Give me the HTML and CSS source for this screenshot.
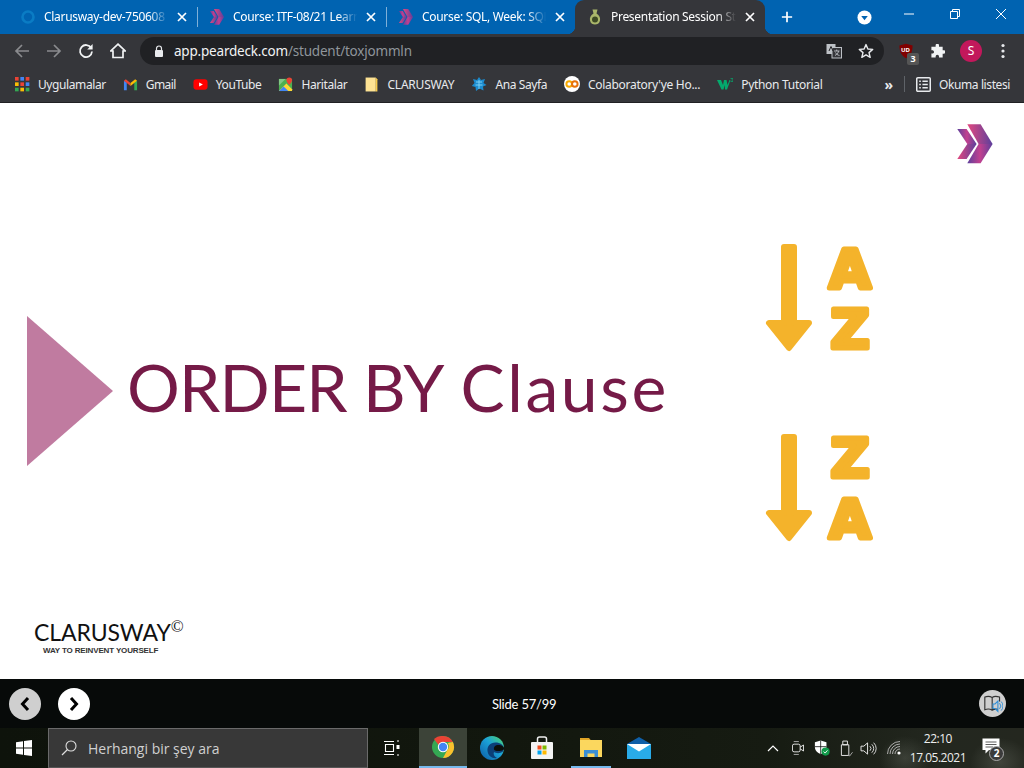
FILE: index.html
```html
<!DOCTYPE html>
<html lang="tr">
<head>
    <meta charset="UTF-8">
    <title>Presentation Session Student</title>
    <link rel="stylesheet" href="styles.css">
</head>
<body>
    <!-- shared shapes -->
    <svg class="sprite" width="0" height="0">
        <defs>
            <linearGradient id="chev-top" x1="0" y1="0" x2="1" y2="0">
                <stop offset="0" stop-color="#e2487f"/>
                <stop offset="1" stop-color="#5c3f9c"/>
            </linearGradient>
            <linearGradient id="chev-low" x1="0" y1="0" x2="1" y2="0">
                <stop offset="0" stop-color="#5c3f9c"/>
                <stop offset="0.5" stop-color="#c2408f"/>
                <stop offset="1" stop-color="#5c3f9c"/>
            </linearGradient>
            <symbol id="chevrons" viewBox="0 0 36 40">
                <polygon points="0.3,5 9.6,5 19.6,20 10.3,20" fill="url(#chev-low)"/>
                <polygon points="10.3,20 19.6,20 9.6,35 0.3,35" fill="url(#chev-top)"/>
                <polygon points="10.3,0.3 23.6,0.3 35.6,20 21.6,20" fill="url(#chev-top)"/>
                <polygon points="21.6,20 35.6,20 23.6,39.3 10.3,39.3" fill="url(#chev-low)"/>
            </symbol>
            <symbol id="tab-x" viewBox="0 0 10 10">
                <path d="M1 1 L9 9 M9 1 L1 9" stroke="#fff" stroke-width="1.7"/>
            </symbol>
        </defs>
    </svg>

    <div class="tabstrip">
        <div class="tab">
            <svg class="tab-icon" viewBox="0 0 16 16"><circle cx="8" cy="8" r="5.5" fill="none" stroke="#0a7cc4" stroke-width="2.6"/></svg>
            <span class="tab-title">Clarusway-dev-750608 -</span>
            <svg class="tab-close"><use href="#tab-x"/></svg>
        </div>
        <div class="tab tab-sep">
            <svg class="tab-icon" viewBox="0 0 16 16"><use href="#chevrons"/></svg>
            <span class="tab-title">Course: ITF-08/21 Learn</span>
            <svg class="tab-close"><use href="#tab-x"/></svg>
        </div>
        <div class="tab tab-sep">
            <svg class="tab-icon" viewBox="0 0 16 16"><use href="#chevrons"/></svg>
            <span class="tab-title">Course: SQL, Week: SQL</span>
            <svg class="tab-close"><use href="#tab-x"/></svg>
        </div>
        <div class="tab tab-active">
            <svg class="tab-icon" viewBox="0 0 16 16">
                <path d="M5.5 0.5 L10.5 0.5 L9.5 4.5 C12.5 6 13.5 9 13 11.5 C12.5 14.5 10 15.5 8 15.5 C6 15.5 3.5 14.5 3 11.5 C2.5 9 3.5 6 6.5 4.5 Z" fill="#a9b66a"/>
                <circle cx="8" cy="10.5" r="3" fill="#3d4a24"/>
            </svg>
            <span class="tab-title">Presentation Session St</span>
            <svg class="tab-close"><use href="#tab-x"/></svg>
        </div>
        <svg class="new-tab" viewBox="0 0 14 14"><path d="M7 1 V13 M1 7 H13" stroke="#fff" stroke-width="2"/></svg>
        <div class="strip-right">
            <svg class="tab-search" viewBox="0 0 16 16"><circle cx="8" cy="8" r="7.5" fill="#fff"/><path d="M4.5 6.3 H11.5 L8 10.8 Z" fill="#0063b1"/></svg>
            <div class="win-btns">
                <svg viewBox="0 0 12 12"><path d="M1 6 H11" stroke="#fff"/></svg>
                <svg viewBox="0 0 12 12"><path d="M1.5 3.5 H8.5 V10.5 H1.5 Z M3.5 3.5 V1.5 H10.5 V8.5 H8.5" fill="none" stroke="#fff"/></svg>
                <svg viewBox="0 0 12 12"><path d="M1 1 L11 11 M11 1 L1 11" stroke="#fff"/></svg>
            </div>
        </div>
    </div>

    <div class="toolbar">
        <svg class="tool-icon" viewBox="0 0 16 16"><path d="M15 8 H2 M8 2 L2 8 L8 14" fill="none" stroke="#8a8b8e" stroke-width="1.7"/></svg>
        <svg class="tool-icon" viewBox="0 0 16 16"><path d="M1 8 H14 M8 2 L14 8 L8 14" fill="none" stroke="#8a8b8e" stroke-width="1.7"/></svg>
        <svg class="tool-icon" viewBox="0 0 16 16"><path d="M13.2 5 A6 6 0 1 0 14 8.5" fill="none" stroke="#f1f3f4" stroke-width="1.8"/><path d="M14.6 1 V6.4 H9.2 Z" fill="#f1f3f4"/></svg>
        <svg class="tool-icon" viewBox="0 0 16 16"><path d="M8 1.2 L15.2 8 H13 V14.5 H3 V8 H0.8 Z" fill="none" stroke="#f1f3f4" stroke-width="1.7"/></svg>
        <div class="omnibox">
            <svg class="lock" viewBox="0 0 10 12"><path d="M2.5 5 V3.5 A2.5 2.5 0 0 1 7.5 3.5 V5" fill="none" stroke="#e8eaed" stroke-width="1.2"/><rect x="1" y="5" width="8" height="7" rx="1" fill="#e8eaed"/></svg>
            <span class="url">app.peardeck.com<span class="url-path">/student/toxjommln</span></span>
            <svg class="omni-translate" viewBox="0 0 16 16"><rect x="0.5" y="1" width="9" height="10" fill="#bdc1c6"/><rect x="6" y="4.5" width="9.5" height="10.5" fill="#35363a" stroke="#bdc1c6"/><path d="M3 8 L5 3.5 L7 8" fill="none" stroke="#202124"/><path d="M8 8 H13.5 M10.7 6.5 V8 M9 12.5 C11.5 11 12.5 9.5 12.5 8 M9.5 9.5 C10 11 11.5 12 13.5 12.5" fill="none" stroke="#bdc1c6" stroke-width="0.9"/></svg>
            <svg class="omni-star" viewBox="0 0 16 16"><path d="M8 1.6 L9.9 6 L14.7 6.4 L11 9.6 L12.2 14.3 L8 11.8 L3.8 14.3 L5 9.6 L1.3 6.4 L6.1 6 Z" fill="none" stroke="#e8eaed" stroke-width="1.4" stroke-linejoin="round"/></svg>
        </div>
        <div class="ext-ublock">
            <svg viewBox="0 0 16 16"><path d="M8 0.8 L14.6 2.6 C14.6 9 12.5 13 8 15.2 C3.5 13 1.4 9 1.4 2.6 Z" fill="#800000"/></svg>
            <span class="ublock-text">UD</span>
            <span class="ublock-badge">3</span>
        </div>
        <svg class="ext-puzzle" viewBox="0 0 16 16"><path d="M6 1.5 A1.8 1.8 0 0 1 9.6 1.5 V3 H13.5 V6.6 H14.6 A1.9 1.9 0 0 1 14.6 10.4 H13.5 V14.5 H9.6 V13.2 A1.8 1.8 0 0 0 6 13.2 V14.5 H1.5 V10.2 H3 A1.9 1.9 0 0 0 3 6.6 H1.5 V3 H6 Z" fill="#f1f3f4"/></svg>
        <span class="avatar">S</span>
        <svg class="menu-dots" viewBox="0 0 4 16"><circle cx="2" cy="2.5" r="1.6" fill="#e8eaed"/><circle cx="2" cy="8" r="1.6" fill="#e8eaed"/><circle cx="2" cy="13.5" r="1.6" fill="#e8eaed"/></svg>
    </div>

    <div class="bookmarks">
        <a class="bm bm-apps">
            <svg viewBox="0 0 14 14">
                <rect x="0" y="0" width="3.4" height="3.4" fill="#ea4335"/><rect x="5" y="0" width="3.4" height="3.4" fill="#4285f4"/><rect x="10" y="0" width="3.4" height="3.4" fill="#ea4335"/>
                <rect x="0" y="5" width="3.4" height="3.4" fill="#fbbc05"/><rect x="5" y="5" width="3.4" height="3.4" fill="#ea4335"/><rect x="10" y="5" width="3.4" height="3.4" fill="#4285f4"/>
                <rect x="0" y="10" width="3.4" height="3.4" fill="#34a853"/><rect x="5" y="10" width="3.4" height="3.4" fill="#fbbc05"/><rect x="10" y="10" width="3.4" height="3.4" fill="#34a853"/>
            </svg>
            Uygulamalar
        </a>
        <a class="bm bm-gmail">
            <svg viewBox="0 0 16 14"><path d="M1 13 V3 L4 4.5 V13 Z" fill="#4285f4"/><path d="M15 13 V3 L12 4.5 V13 Z" fill="#34a853"/><path d="M1 3 L8 8.5 L8 5.5 L3 1.5 Z" fill="#ea4335"/><path d="M15 3 L8 8.5 L8 5.5 L13 1.5 Z" fill="#fbbc05"/></svg>
            Gmail
        </a>
        <a class="bm bm-youtube">
            <svg viewBox="0 0 16 14"><rect x="0.5" y="1.5" width="15" height="11" rx="3" fill="#f00"/><path d="M6.5 4.8 L10.5 7 L6.5 9.2 Z" fill="#fff"/></svg>
            YouTube
        </a>
        <a class="bm bm-maps">
            <svg viewBox="0 0 16 16"><rect x="1" y="2" width="14" height="13" fill="#4caf50"/><path d="M1 15 L9 7 L15 13 V15 Z" fill="#fdd835"/><path d="M1 15 L6 10 L11 15 Z" fill="#4285f4"/><path d="M1 2 H8 L1 9 Z" fill="#81c784"/><path d="M12 0.5 A3 3 0 0 1 15 3.5 C15 5.5 12 8.5 12 8.5 C12 8.5 9 5.5 9 3.5 A3 3 0 0 1 12 0.5 Z" fill="#ea4335"/></svg>
            Haritalar
        </a>
        <a class="bm bm-folder">
            <svg viewBox="0 0 12 14"><path d="M0.5 0.5 H10 V13.5 H0.5 Z" fill="#fde293"/><path d="M10 0.5 L11.5 2 V13.5 H10 Z" fill="#f7cb4d"/></svg>
            CLARUSWAY
        </a>
        <a class="bm bm-home">
            <svg viewBox="0 0 16 16"><path d="M8 1 L10 4 L14 3 L12.5 7 L15.5 9 L12 10.5 L12.5 14.5 L8.5 12.5 L5 15 L4.5 11 L0.8 10 L3.5 7 L2 3 L6 4 Z" fill="#1c8ccf"/><path d="M5 6 H11 M4.5 9 H11.5 M8 4 V13" stroke="#7cd1f5"/></svg>
            Ana Sayfa
        </a>
        <a class="bm bm-colab">
            <svg viewBox="0 0 16 16"><circle cx="8" cy="8" r="8" fill="#fff"/><circle cx="5.2" cy="8" r="2.8" fill="none" stroke="#f9ab00" stroke-width="2"/><circle cx="10.8" cy="8" r="2.8" fill="none" stroke="#e8710a" stroke-width="2"/></svg>
            Colaboratory'ye Ho...
        </a>
        <a class="bm bm-w3">
            <svg viewBox="0 0 16 12"><path d="M0 2 H4 L6 7 L7 2 H9.5 L10.5 7 L12.5 2 H13.5 L10 11.5 H8 L7.8 7 L6.5 11.5 H4.5 Z" fill="#04aa6d"/><path d="M13.5 0.5 H16 L14.8 2 L16 3.5 H13.5" fill="none" stroke="#04aa6d" stroke-width="0.7"/></svg>
            Python Tutorial
        </a>
        <div class="bm-right">
            <span class="bm-more">»</span>
            <span class="bm-divider"></span>
            <a class="bm bm-reading">
                <svg viewBox="0 0 14 14"><rect x="0.7" y="0.7" width="12.6" height="12.6" rx="1" fill="none" stroke="#e8eaed" stroke-width="1.4"/><path d="M3 4 H4.5 M6 4 H11 M3 7 H4.5 M6 7 H11 M3 10 H4.5 M6 10 H11" stroke="#e8eaed" stroke-width="1.3"/></svg>
                Okuma listesi
            </a>
        </div>
    </div>

    <main class="slide">
        <svg class="slide-logo"><use href="#chevrons"/></svg>
        <svg class="slide-triangle" viewBox="0 0 86 150"><polygon points="0,0 86,75 0,150" fill="#c07ba0"/></svg>
        <h1 class="slide-title"><span class="title-caps">ORDER BY</span> <span class="title-word">Clause</span></h1>

        <svg class="sort-icon sort-az" viewBox="0 0 108 108">
            <path d="M19 3 H29 V79 H44 L24 104 L4 79 H19 Z" class="sort-arrow"/>
            <text x="85" y="43.5" class="sort-letter">A</text>
            <text x="85" y="103.5" class="sort-letter">Z</text>
        </svg>
        <svg class="sort-icon sort-za" viewBox="0 0 108 108">
            <path d="M19 3 H29 V79 H44 L24 104 L4 79 H19 Z" class="sort-arrow"/>
            <text x="85" y="42.5" class="sort-letter">Z</text>
            <text x="85" y="104" class="sort-letter">A</text>
        </svg>

        <div class="brand">
            <div class="brand-name">CLARUSWAY<sup class="brand-copy">©</sup></div>
            <div class="brand-tag">WAY TO REINVENT YOURSELF</div>
        </div>
    </main>

    <div class="slide-nav">
        <button class="nav-btn nav-prev"><svg viewBox="0 0 12 16"><path d="M9 2 L3.5 8 L9 14" fill="none" stroke="#000" stroke-width="3"/></svg></button>
        <button class="nav-btn nav-next"><svg viewBox="0 0 12 16"><path d="M3 2 L8.5 8 L3 14" fill="none" stroke="#000" stroke-width="3"/></svg></button>
        <span class="slide-count">Slide 57/99</span>
        <button class="nav-read">
            <svg viewBox="0 0 24 22">
                <path d="M11 3 C8.5 1.5 4.5 1.5 2 2.5 V18 C4.5 17 8.5 17 11 18.5 C13.5 17 16 17 18 17.5 M11 3 C13 1.5 17 1.5 20 2.5 V8 M11 3 V18.5" fill="none" stroke="#333" stroke-width="1.4"/>
                <path d="M12 11 H14.5 L18 7.5 V20 L14.5 16.5 H12 Z" fill="none" stroke="#2f8fd8" stroke-width="1.3"/>
                <path d="M20 10 A5 5 0 0 1 20 17 M22 8 A8 8 0 0 1 22 19" fill="none" stroke="#2f8fd8" stroke-width="1.2"/>
            </svg>
        </button>
    </div>

    <footer class="taskbar">
        <svg class="start" viewBox="0 0 16 16"><path d="M0 2.3 L7 1.3 V7.6 H0 Z M8 1.1 L16 0 V7.6 H8 Z M0 8.4 H7 V14.7 L0 13.7 Z M8 8.4 H16 V16 L8 14.9 Z" fill="#fff"/></svg>
        <div class="search-box">
            <svg viewBox="0 0 16 16"><circle cx="10" cy="6" r="5" fill="none" stroke="#ddd" stroke-width="1.1"/><path d="M6.5 9.5 L1 15" stroke="#ddd" stroke-width="1.2"/></svg>
            <span>Herhangi bir şey ara</span>
        </div>
        <div class="task-btn task-view">
            <svg viewBox="0 0 16 16"><path d="M0 1.5 H10 M0 14.5 H10 M1.5 4.5 H9.5 V11.5 H1.5 Z" fill="none" stroke="#fff" stroke-width="1.1"/><path d="M13 1 H15 M13 15 H15" stroke="#fff"/><rect x="12.5" y="5" width="3" height="4" fill="#fff"/></svg>
        </div>
        <div class="task-btn task-chrome">
            <svg viewBox="0 0 24 24">
                <circle cx="12" cy="12" r="11" fill="#34a853"/>
                <path d="M12 1 A11 11 0 0 1 21.9 7 H12 A5 5 0 0 0 7.5 10 L3 4 A11 11 0 0 1 12 1 Z" fill="#ea4335"/>
                <path d="M21.9 7 A11 11 0 0 1 12 23 L16.3 15 A5 5 0 0 0 16.5 8 Z" fill="#fbc02d"/>
                <circle cx="12" cy="12" r="5.2" fill="#fff"/><circle cx="12" cy="12" r="4.2" fill="#4285f4"/>
            </svg>
        </div>
        <div class="task-btn task-edge">
            <svg viewBox="0 0 24 24">
                <defs><linearGradient id="edge-g" x1="0" y1="1" x2="1" y2="0"><stop offset="0" stop-color="#0c59a4"/><stop offset="0.55" stop-color="#1ba1d8"/><stop offset="1" stop-color="#50d86a"/></linearGradient></defs>
                <circle cx="12" cy="12" r="12" fill="url(#edge-g)"/>
                <path d="M24 13 C24 9 20 6.5 15.5 6.5 C10 6.5 7 10.5 7.5 15 C8 20 12.5 23 17 22 C14 20.5 13 18 14 16 C16 17.5 20 17.5 22.5 16 Z" fill="#0c3f78"/>
                <path d="M24 12.5 C24 10 20.5 8.5 17 9 C14.5 9.5 13.5 11.5 14 13.5 C15 15 18 15.5 21 14.8 C22.5 14.5 24 14 24 12.5 Z" fill="#0b0f0a"/>
            </svg>
        </div>
        <div class="task-btn task-store">
            <svg viewBox="0 0 24 24">
                <path d="M7.5 7 V3 A2 2 0 0 1 9.5 1 H14.5 A2 2 0 0 1 16.5 3 V7" fill="none" stroke="#eee" stroke-width="1.5"/>
                <rect x="1" y="6" width="22" height="17" rx="1" fill="#f4f4f4"/>
                <rect x="7.5" y="9.5" width="4" height="4" fill="#f25022"/><rect x="12.5" y="9.5" width="4" height="4" fill="#7fba00"/>
                <rect x="7.5" y="14.5" width="4" height="4" fill="#00a4ef"/><rect x="12.5" y="14.5" width="4" height="4" fill="#ffb900"/>
            </svg>
        </div>
        <div class="task-btn task-files">
            <svg viewBox="0 0 24 24">
                <path d="M1 3 H10 L12 5.5 H1 Z" fill="#e0a526"/>
                <rect x="1" y="5" width="22" height="17" fill="#fbd75e"/>
                <path d="M5 22 V15 H19 V22 H15.5 V18.5 H8.5 V22 Z" fill="#3b8fd4"/>
            </svg>
        </div>
        <div class="task-btn task-mail">
            <svg viewBox="0 0 24 24">
                <path d="M12 1 L24 8 H0 Z" fill="#0f5fa8"/>
                <rect x="0" y="8" width="24" height="15" fill="#29abe8"/>
                <path d="M0 8 L12 15.5 L24 8 Z" fill="#fff"/>
            </svg>
        </div>

        <div class="tray">
            <svg class="tray-chevron" viewBox="0 0 12 8"><path d="M1 7 L6 2 L11 7" fill="none" stroke="#fff" stroke-width="1.2"/></svg>
            <svg class="tray-meet" viewBox="0 0 14 18"><rect x="0.5" y="4.5" width="9" height="9" rx="2" fill="none" stroke="#fff"/><path d="M9.5 8 L13.5 5.5 V12.5 L9.5 10" fill="none" stroke="#fff"/><path d="M2 1.5 H8 M2 16.5 H8" stroke="#bbb"/></svg>
            <svg class="tray-shield" viewBox="0 0 18 18"><path d="M7.5 0.5 L14 2.5 V8 C14 12 11 14.5 7.5 16 C4 14.5 1 12 1 8 V2.5 Z" fill="#fff"/><path d="M1 7.5 H14 M7.5 0.5 V16" stroke="#111" stroke-width="0.9"/><circle cx="13" cy="13" r="4.6" fill="#119a4a"/><path d="M10.8 13 L12.5 14.7 L15.2 11.6" fill="none" stroke="#fff" stroke-width="1"/></svg>
            <svg class="tray-usb" viewBox="0 0 14 18"><path d="M3 1 H8 V5 H3 Z M1.5 5 H9.5 V16.5 H1.5 Z" fill="none" stroke="#eee"/><path d="M8.5 16 L10.5 17 L13.5 13" fill="none" stroke="#aaa"/></svg>
            <svg class="tray-volume" viewBox="0 0 18 16"><path d="M1 5.5 H4 L8 2 V14 L4 10.5 H1 Z" fill="none" stroke="#eee"/><path d="M10.5 5.5 A3.5 3.5 0 0 1 10.5 10.5 M12.5 3.5 A6 6 0 0 1 12.5 12.5 M14.5 1.8 A8.5 8.5 0 0 1 14.5 14.2" fill="none" stroke="#ddd"/></svg>
            <svg class="tray-wifi" viewBox="0 0 14 14"><path d="M0.5 13 A12.5 12.5 0 0 1 13 0.5 M3 13 A10 10 0 0 1 13 3 M5.5 13 A7.5 7.5 0 0 1 13 5.5 M8 13 A5 5 0 0 1 13 8" fill="none" stroke="#bbb" stroke-width="0.9"/><circle cx="12" cy="12" r="1.6" fill="#fff"/></svg>
            <div class="clock"><span>22:10</span><span>17.05.2021</span></div>
            <div class="notify">
                <svg viewBox="0 0 18 16"><path d="M0.5 0.5 H17.5 V12 H7 L3.5 15.5 V12 H0.5 Z" fill="#fff"/><path d="M3.5 4 H14.5 M3.5 6.5 H14.5 M3.5 9 H11" stroke="#333" stroke-width="0.8"/></svg>
                <span class="notify-count">2</span>
            </div>
        </div>
    </footer>
</body>
</html>
```

FILE: styles.css
```css
* {
    box-sizing: border-box;
}
html, body {
    margin: 0;
    height: 100%;
}
body {
    display: flex;
    flex-direction: column;
    height: 768px;
    overflow: hidden;
    font-family: "Noto Sans", "Open Sans", sans-serif;
    font-size: 12px;
    color: #fff;
    background: #fff;
}
.sprite {
    position: absolute;
}

/* tabs */
.tabstrip {
    display: flex;
    align-items: center;
    height: 34px;
    flex: none;
    padding-left: 8px;
    background: #0063b1;
}
.tab {
    position: relative;
    display: flex;
    align-items: center;
    width: 189px;
    height: 34px;
    padding: 0 10px 0 12px;
    flex: none;
}
.tab-sep::before {
    content: "";
    position: absolute;
    left: 0;
    top: 7px;
    height: 20px;
    width: 1px;
    background: #7fb0d8;
}
.tab-icon {
    width: 16px;
    height: 16px;
    margin-right: 8px;
    flex: none;
}
.tab-title {
    flex: 1;
    min-width: 0;
    margin-top: -1px;
    overflow: hidden;
    white-space: nowrap;
    letter-spacing: -0.3px;
    -webkit-mask-image: linear-gradient(to right, #000 82%, transparent 97%);
    mask-image: linear-gradient(to right, #000 82%, transparent 97%);
}
.tab-close {
    width: 10px;
    height: 10px;
    margin-left: 5px;
    flex: none;
}
.tab-active {
    width: 190px;
    background: #35363a;
    border-radius: 9px 9px 0 0;
}
.tab-active::before,
.tab-active::after {
    content: "";
    position: absolute;
    bottom: 0;
    width: 8px;
    height: 8px;
}
.tab-active::before {
    left: -8px;
    background: radial-gradient(circle at 0 0, #0063b1 8px, #35363a 8.5px);
}
.tab-active::after {
    right: -8px;
    background: radial-gradient(circle at 100% 0, #0063b1 8px, #35363a 8.5px);
}
.new-tab {
    width: 12px;
    height: 12px;
    margin-left: 16px;
    flex: none;
}
.strip-right {
    display: flex;
    align-items: center;
    margin-left: auto;
}
.tab-search {
    width: 15px;
    height: 15px;
    margin-right: 31px;
}
.win-btns {
    display: flex;
    gap: 34px;
    margin-right: 17px;
    margin-top: -6px;
}
.win-btns svg {
    width: 12px;
    height: 12px;
}

/* toolbar */
.toolbar {
    display: flex;
    align-items: center;
    height: 34px;
    flex: none;
    padding-left: 14px;
    background: #35363a;
}
.tool-icon {
    width: 16px;
    height: 16px;
    margin-right: 16px;
    flex: none;
}
.omnibox {
    display: flex;
    align-items: center;
    width: 744px;
    height: 28px;
    margin-left: -2px;
    padding-left: 14px;
    border-radius: 14px;
    background: #202124;
}
.lock {
    width: 10px;
    height: 12px;
    margin-right: 10px;
}
.url {
    flex: 1;
    font-size: 13.5px;
    letter-spacing: -0.2px;
    color: #f1f3f4;
}
.url-path {
    color: #8f959b;
}
.omni-translate {
    width: 16px;
    height: 16px;
    margin-right: 16px;
}
.omni-star {
    width: 16px;
    height: 16px;
    margin-right: 10px;
}
.ext-ublock {
    position: relative;
    width: 16px;
    height: 16px;
    margin-left: 14px;
    flex: none;
}
.ext-ublock svg {
    display: block;
}
.ublock-text {
    position: absolute;
    left: 3px;
    top: 3px;
    font-size: 6px;
    font-weight: bold;
}
.ublock-badge {
    position: absolute;
    left: 9px;
    top: 10px;
    width: 12px;
    height: 12px;
    border-radius: 2px;
    background: #555;
    font-size: 9px;
    font-weight: bold;
    line-height: 12px;
    text-align: center;
}
.ext-puzzle {
    width: 15px;
    height: 15px;
    margin-left: 16px;
    flex: none;
}
.avatar {
    width: 22px;
    height: 22px;
    margin-left: 15px;
    border-radius: 50%;
    background: #c2185b;
    font-size: 12px;
    line-height: 22px;
    text-align: center;
    flex: none;
}
.menu-dots {
    width: 4px;
    height: 16px;
    margin-left: 19px;
    flex: none;
}

/* bookmarks */
.bookmarks {
    display: flex;
    align-items: center;
    height: 35px;
    flex: none;
    padding: 0 14px 2px 15px;
    gap: 17px;
    background: #35363a;
    border-bottom: 1px solid #202124;
}
.bm {
    display: flex;
    align-items: center;
    gap: 8px;
    color: #e8eaed;
    white-space: nowrap;
    letter-spacing: -0.4px;
}
.bm svg {
    width: 15px;
    height: 15px;
    flex: none;
}
.bm-gmail {
    letter-spacing: -0.6px;
}
.bm-folder {
    letter-spacing: -0.2px;
}
.bm-home svg,
.bm-colab svg,
.bm-w3 svg {
    width: 16px;
    height: 16px;
}
.bm-colab,
.bm-w3 {
    letter-spacing: -0.3px;
}
.bm-right {
    display: flex;
    align-items: center;
    margin-left: auto;
}
.bm-more {
    margin-right: 11px;
    font-size: 14px;
    font-weight: bold;
    color: #e8eaed;
}
.bm-divider {
    width: 1px;
    height: 16px;
    margin-right: 11px;
    background: #5f6368;
}

/* slide */
.slide {
    position: relative;
    flex: 1;
    background: #fff;
}
.slide-logo {
    position: absolute;
    left: 957px;
    top: 21px;
    width: 36px;
    height: 40px;
}
.slide-triangle {
    position: absolute;
    left: 27px;
    top: 213px;
    width: 86px;
    height: 150px;
}
.slide-title {
    position: absolute;
    left: 127px;
    top: 241px;
    margin: 0;
    font-family: Lato, sans-serif;
    font-size: 66px;
    font-weight: 400;
    line-height: 86px;
    white-space: nowrap;
    color: #751a47;
}
.title-caps {
    letter-spacing: -0.8px;
}
.title-word {
    letter-spacing: 2.6px;
}
.sort-icon {
    position: absolute;
    left: 765px;
    width: 108px;
    height: 108px;
    overflow: visible;
}
.sort-az {
    top: 141px;
}
.sort-za {
    top: 331px;
}
.sort-arrow {
    fill: #f4b32b;
    stroke: #f4b32b;
    stroke-width: 6;
    stroke-linejoin: round;
}
.sort-letter {
    font-family: "DejaVu Sans", sans-serif;
    font-size: 54px;
    font-weight: bold;
    text-anchor: middle;
    fill: #f4b32b;
    stroke: #f4b32b;
    stroke-width: 5;
    stroke-linejoin: round;
}
.brand {
    position: absolute;
    left: 34px;
    top: 515px;
    color: #111;
}
.brand-name {
    font-family: Lato, sans-serif;
    font-size: 23px;
    line-height: 28px;
    letter-spacing: -0.1px;
}
.brand-copy {
    font-family: "Liberation Serif", serif;
    font-size: 17px;
    line-height: 0;
}
.brand-tag {
    margin-left: 9px;
    font-family: "Liberation Sans", sans-serif;
    font-size: 8px;
    font-weight: bold;
    letter-spacing: -0.15px;
    color: #333;
}

/* slide navigation */
.slide-nav {
    position: relative;
    display: flex;
    align-items: center;
    height: 49px;
    flex: none;
    padding: 0 18px 0 9px;
    background: #070a09;
}
.nav-btn {
    display: flex;
    align-items: center;
    justify-content: center;
    width: 32px;
    height: 32px;
    margin-right: 17px;
    padding: 0;
    border: none;
    border-radius: 50%;
}
.nav-btn svg {
    width: 12px;
    height: 16px;
}
.nav-prev {
    background: #cfcfcf;
}
.nav-next {
    background: #fff;
}
.slide-count {
    margin-left: 385px;
    font-family: Lato, sans-serif;
    font-size: 13px;
    letter-spacing: -0.2px;
}
.nav-read {
    display: flex;
    align-items: center;
    justify-content: center;
    width: 27px;
    height: 27px;
    margin-left: auto;
    padding: 0;
    border: none;
    border-radius: 50%;
    background: #cfcfcf;
}
.nav-read svg {
    width: 20px;
    height: 18px;
}

/* windows taskbar */
.taskbar {
    display: flex;
    align-items: center;
    height: 40px;
    flex: none;
    background:
        radial-gradient(ellipse 26px 22px at 905px 30px, rgba(120, 125, 115, 0.3), transparent),
        radial-gradient(ellipse 30px 24px at 1000px 34px, rgba(130, 135, 125, 0.3), transparent),
        linear-gradient(to right, #0e130b 0%, #12170e 50%, #161b12 75%, #23271f 92%, #24271f 100%);
}
.start {
    width: 16px;
    height: 16px;
    margin: 0 16px;
    flex: none;
}
.search-box {
    display: flex;
    align-items: center;
    width: 320px;
    height: 40px;
    padding-left: 12px;
    border: 1px solid #6a6a6a;
    border-bottom-color: #555;
    background: #383838;
    font-family: "Open Sans", sans-serif;
    font-size: 14px;
    color: #d0d0d0;
    flex: none;
}
.search-box svg {
    width: 16px;
    height: 16px;
    margin-right: 11px;
}
.task-btn {
    display: flex;
    align-items: center;
    justify-content: center;
    width: 48px;
    height: 40px;
    flex: none;
}
.task-btn svg {
    width: 24px;
    height: 24px;
}
.task-view {
    width: 51px;
    padding-right: 4px;
}
.task-view svg {
    width: 16px;
    height: 16px;
}
.task-chrome {
    background: #3c4338;
    border-bottom: 2px solid #76b9ed;
}
.task-edge {
    width: 49px;
}
.task-store {
    width: 51px;
}
.task-files {
    width: 40px;
    margin: 0 4px;
    border-bottom: 2px solid #76b9ed;
}
.tray {
    display: flex;
    align-items: center;
    margin-left: auto;
    height: 40px;
}
.tray svg {
    flex: none;
}
.tray-chevron {
    width: 12px;
    height: 8px;
    margin-right: 13px;
}
.tray-meet {
    width: 12px;
    height: 16px;
    margin-right: 10px;
}
.tray-shield {
    width: 16px;
    height: 16px;
    margin-right: 10px;
}
.tray-usb {
    width: 13px;
    height: 17px;
    margin-right: 7px;
}
.tray-volume {
    width: 17px;
    height: 15px;
    margin-right: 10px;
}
.tray-wifi {
    width: 14px;
    height: 14px;
    margin-right: 9px;
}
.clock {
    display: flex;
    flex-direction: column;
    align-items: center;
    gap: 3px;
    font-family: "Open Sans", sans-serif;
    font-size: 12px;
    line-height: 16px;
    letter-spacing: -0.5px;
    color: #eee;
}
.notify {
    position: relative;
    width: 20px;
    height: 24px;
    margin: 0 22px 0 16px;
}
.notify svg {
    display: block;
    width: 18px;
    height: 16px;
    margin-top: 2px;
}
.notify-count {
    position: absolute;
    left: 7px;
    top: 10px;
    width: 15px;
    height: 15px;
    border-radius: 50%;
    background: #3b3b3b;
    border: 1px solid #aaa;
    font-size: 10px;
    font-weight: bold;
    line-height: 13px;
    text-align: center;
}
```
